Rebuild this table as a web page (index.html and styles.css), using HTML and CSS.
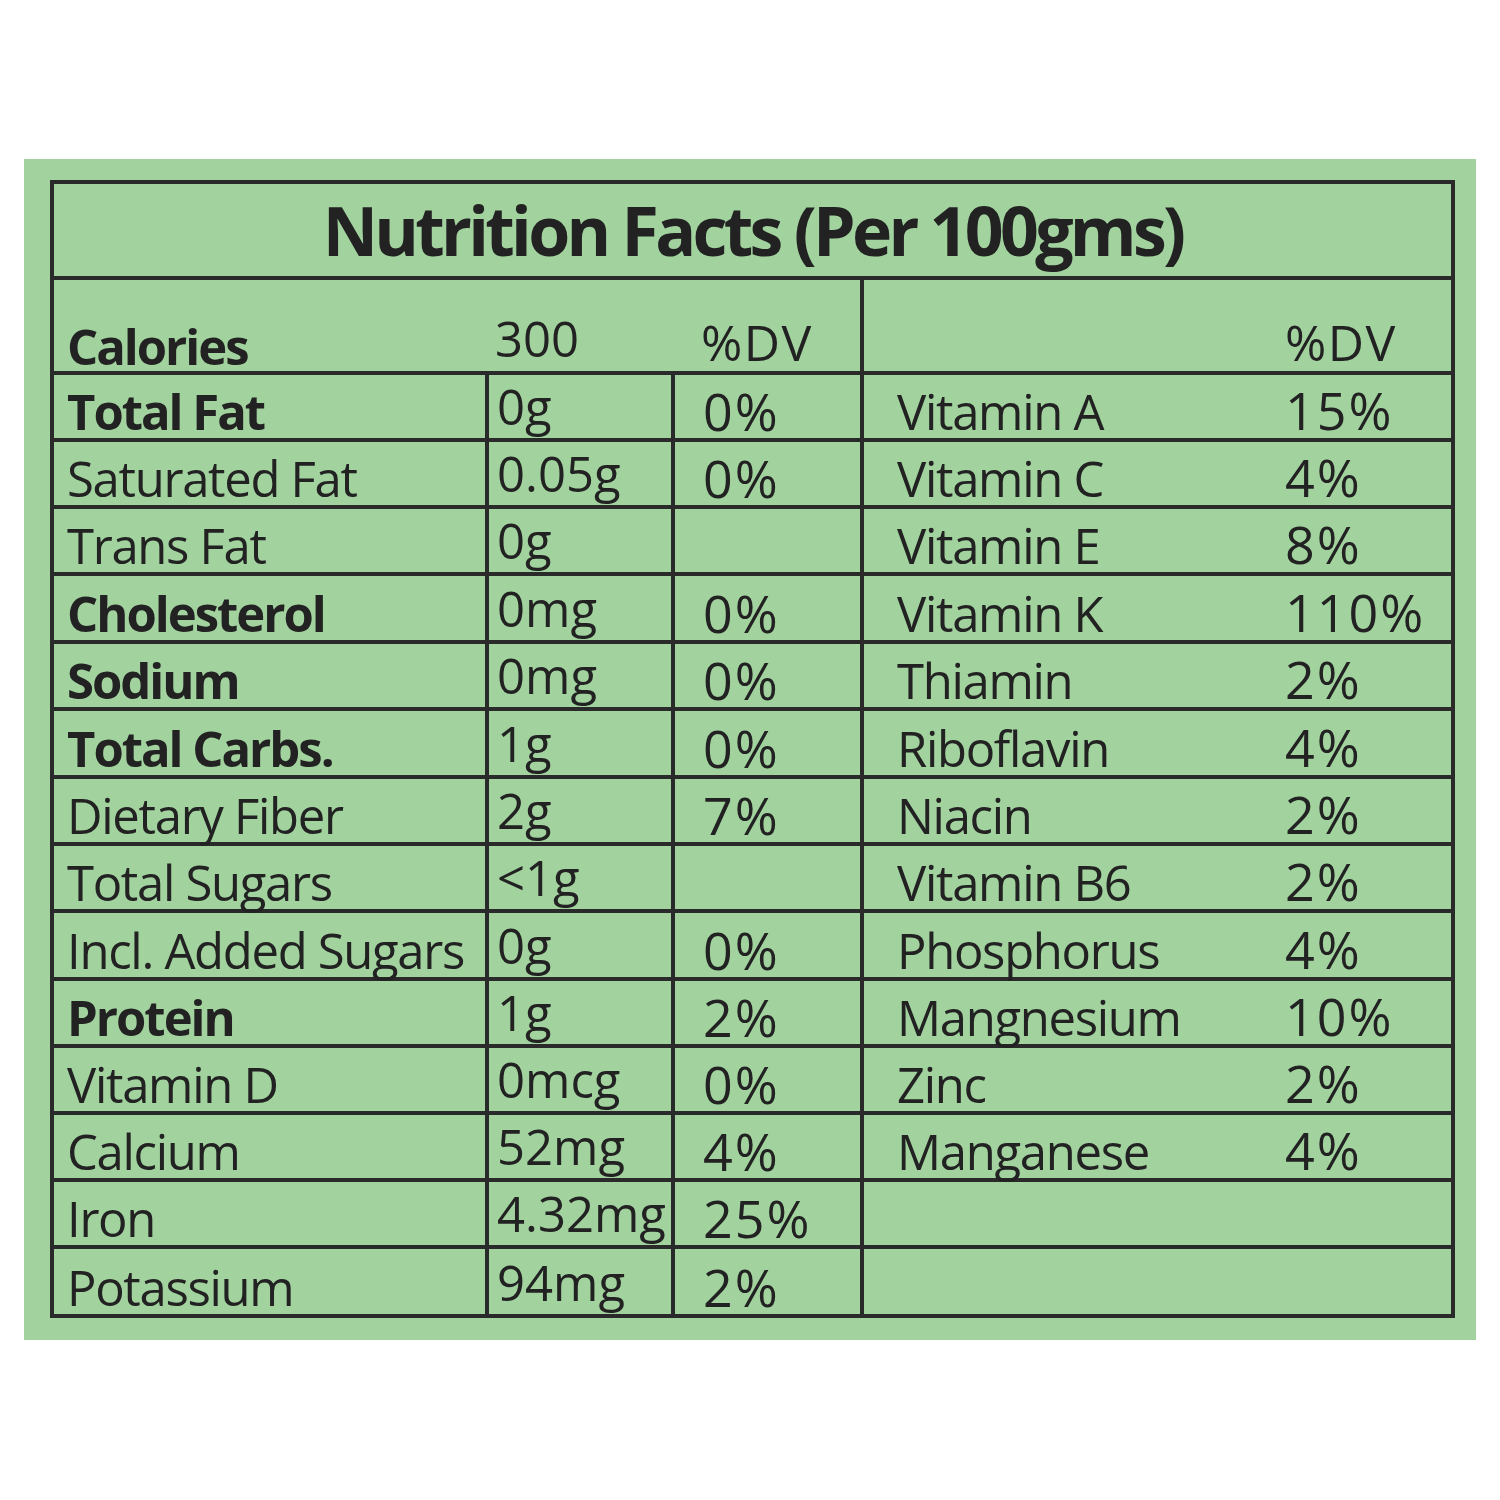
FILE: index.html
```html
<!DOCTYPE html>
<html>
<head>
<meta charset="utf-8">
<link rel="stylesheet" href="styles.css">
</head>
<body>
<div class="panel">
<table class="facts">
<colgroup>
<col class="c1"><col class="c2"><col class="c3"><col class="c4"><col class="c5">
</colgroup>
<tr class="title-row"><th colspan="5">Nutrition Facts (Per 100gms)</th></tr>
<tr class="head-row">
<td class="lab b">Calories</td><td class="amt">300</td><td class="dv">%DV</td><td class="rl"></td><td class="rv">%DV</td>
</tr>
<tr><td class="lab b">Total Fat</td><td class="amt">0g</td><td class="dv">0%</td><td class="rl">Vitamin A</td><td class="rv">15%</td></tr>
<tr><td class="lab">Saturated Fat</td><td class="amt">0.05g</td><td class="dv">0%</td><td class="rl">Vitamin C</td><td class="rv">4%</td></tr>
<tr><td class="lab">Trans Fat</td><td class="amt">0g</td><td class="dv"></td><td class="rl">Vitamin E</td><td class="rv">8%</td></tr>
<tr class="tall"><td class="lab b">Cholesterol</td><td class="amt">0mg</td><td class="dv">0%</td><td class="rl">Vitamin K</td><td class="rv">110%</td></tr>
<tr><td class="lab b">Sodium</td><td class="amt">0mg</td><td class="dv">0%</td><td class="rl">Thiamin</td><td class="rv">2%</td></tr>
<tr class="tall"><td class="lab b">Total Carbs.</td><td class="amt">1g</td><td class="dv">0%</td><td class="rl">Riboflavin</td><td class="rv">4%</td></tr>
<tr><td class="lab">Dietary Fiber</td><td class="amt">2g</td><td class="dv">7%</td><td class="rl">Niacin</td><td class="rv">2%</td></tr>
<tr><td class="lab">Total Sugars</td><td class="amt">&lt;1g</td><td class="dv"></td><td class="rl">Vitamin B6</td><td class="rv">2%</td></tr>
<tr class="tall"><td class="lab">Incl. Added Sugars</td><td class="amt">0g</td><td class="dv">0%</td><td class="rl">Phosphorus</td><td class="rv">4%</td></tr>
<tr><td class="lab b">Protein</td><td class="amt">1g</td><td class="dv">2%</td><td class="rl">Mangnesium</td><td class="rv">10%</td></tr>
<tr><td class="lab">Vitamin D</td><td class="amt">0mcg</td><td class="dv">0%</td><td class="rl">Zinc</td><td class="rv">2%</td></tr>
<tr><td class="lab">Calcium</td><td class="amt">52mg</td><td class="dv">4%</td><td class="rl">Manganese</td><td class="rv">4%</td></tr>
<tr><td class="lab">Iron</td><td class="amt">4.32mg</td><td class="dv">25%</td><td class="rl"></td><td class="rv"></td></tr>
<tr class="tall2"><td class="lab">Potassium</td><td class="amt">94mg</td><td class="dv">2%</td><td class="rl"></td><td class="rv"></td></tr>
</table>
</div>
</body>
</html>
```

FILE: styles.css
```css
html, body {
  margin: 0;
  padding: 0;
  background: #ffffff;
}
body {
  width: 1500px;
  height: 1500px;
  padding-top: 159px;
  box-sizing: border-box;
  font-family: "Open Sans", "Noto Sans", sans-serif;
  color: #222222;
}
.panel {
  margin-left: 24px;
  width: 1452px;
  height: 1181px;
  background: #a2d39f;
  box-sizing: border-box;
  padding: 21px 0 0 26px;
}
.facts {
  border-collapse: collapse;
  width: 1401px;
  table-layout: fixed;
  border: 4px solid #2a2a2a;
}
.c1 { width: 435px; }
.c2 { width: 186px; }
.c3 { width: 189px; }
.c4 { width: 390px; }
.c5 { width: 201px; }
.facts td, .facts th {
  border: 4px solid #2a2a2a;
  padding: 0;
  vertical-align: bottom;
  white-space: nowrap;
  overflow: visible;
  font-size: 49px;
  letter-spacing: -1.3px;
  line-height: 54px;
  font-weight: 400;
  height: 63px;
}
.facts tr.tall td { height: 64px; }
.facts tr.tall2 td { height: 65px; }
.facts td.lab { padding-left: 13px; }
.facts td.amt { padding-left: 8px; padding-bottom: 5px; height: 58px; letter-spacing: 0; }
.facts tr.tall td.amt { height: 59px; }
.facts tr.tall2 td.amt { height: 60px; }
.facts td.dv { padding-left: 28px; line-height: 54px; font-size: 52px; letter-spacing: 2px; }
.facts td.rl { padding-left: 33px; border-right: none; }
.facts td.rv { padding-left: 33px; border-left: none; font-size: 52px; letter-spacing: 2px; line-height: 56px; }
.facts td.b { font-weight: 700; letter-spacing: -2px; }
.title-row th {
  height: 92px;
  padding: 0;
  font-size: 68px;
  line-height: 92px;
  font-weight: 700;
  text-align: center;
  vertical-align: middle;
  letter-spacing: -3.7px;
}
.head-row td {
  height: 91px;
  line-height: 50px;
}
.facts .head-row td.amt { height: 83px; padding-bottom: 8px; }
.head-row td.lab { border-right: none; }
.head-row td.amt { border-left: none; border-right: none; }
.facts .head-row td.dv { border-left: none; padding-bottom: 2px; height: 89px; font-size: 50px; letter-spacing: 1.5px; line-height: 54px; }
.facts .head-row td.rv { padding-bottom: 2px; height: 89px; font-size: 50px; letter-spacing: 1.5px; line-height: 54px; }
```
